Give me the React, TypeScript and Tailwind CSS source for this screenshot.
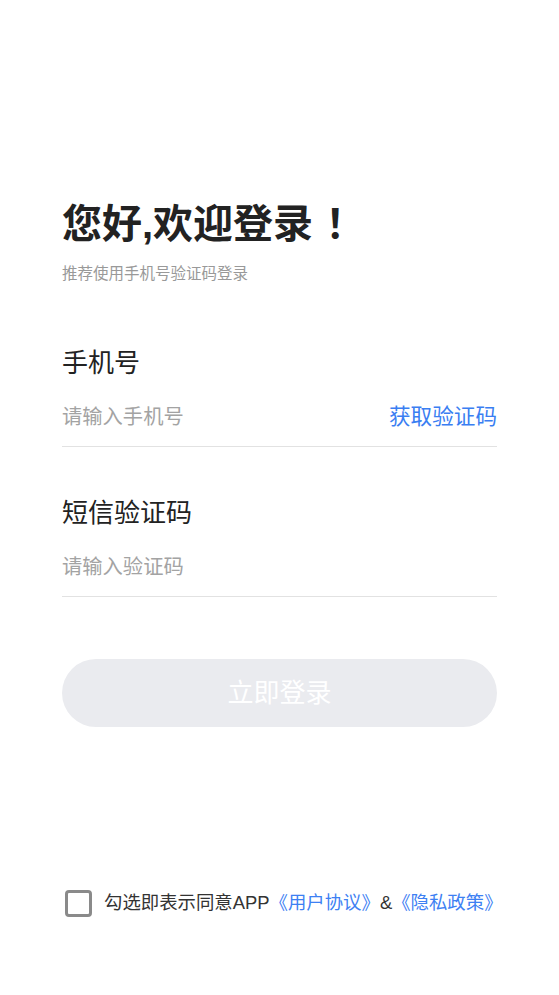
export default function App() {
  const font = { fontFamily: '"Liberation Sans", "Noto Sans CJK SC", sans-serif' };

  return (
    <div className="flex h-screen flex-col bg-white px-[62px] text-[#222]" style={font}>
      <h1 className="pt-[201px] text-[40px] font-bold leading-[46px] text-[#222]">
        您好,欢迎登录<span className="ml-[12px]">！</span>
      </h1>
      <p className="mt-[17px] text-[15.5px] leading-[20px] text-[#999]">推荐使用手机号验证码登录</p>

      <label className="mt-[63px] text-[26px] leading-[32px]">手机号</label>
      <div className="mt-[9px] flex h-[59px] items-center border-b border-[#e2e2e2]">
        <input
          className="min-w-0 flex-1 bg-transparent text-[20.3px] outline-none placeholder:text-[#a3a3a3]"
          placeholder="请输入手机号"
        />
        <button className="text-[21.6px] text-[#3a7ef2]">获取验证码</button>
      </div>

      <label className="mt-[50px] text-[26px] leading-[32px]">短信验证码</label>
      <div className="mt-[9px] flex h-[59px] items-center border-b border-[#e2e2e2]">
        <input
          className="min-w-0 flex-1 bg-transparent text-[20.3px] outline-none placeholder:text-[#a3a3a3]"
          placeholder="请输入验证码"
        />
      </div>

      <button className="mt-[62px] h-[68px] rounded-full bg-[#eaebef] text-[26px] text-white">
        立即登录
      </button>

      <div className="mt-auto mb-[78px] flex h-[28px] items-center whitespace-nowrap">
        <span className="ml-[3px] h-[27px] w-[27px] shrink-0 rounded-[4px] border-[3px] border-[#8a8a8a]" />
        <span className="ml-[12px] text-[18.4px] text-[#333]">
          勾选即表示同意APP
          <span className="text-[#3d80f3]">《用户协议》</span>&amp;
          <span className="text-[#3d80f3]">《隐私政策》</span>
        </span>
      </div>
    </div>
  );
}
